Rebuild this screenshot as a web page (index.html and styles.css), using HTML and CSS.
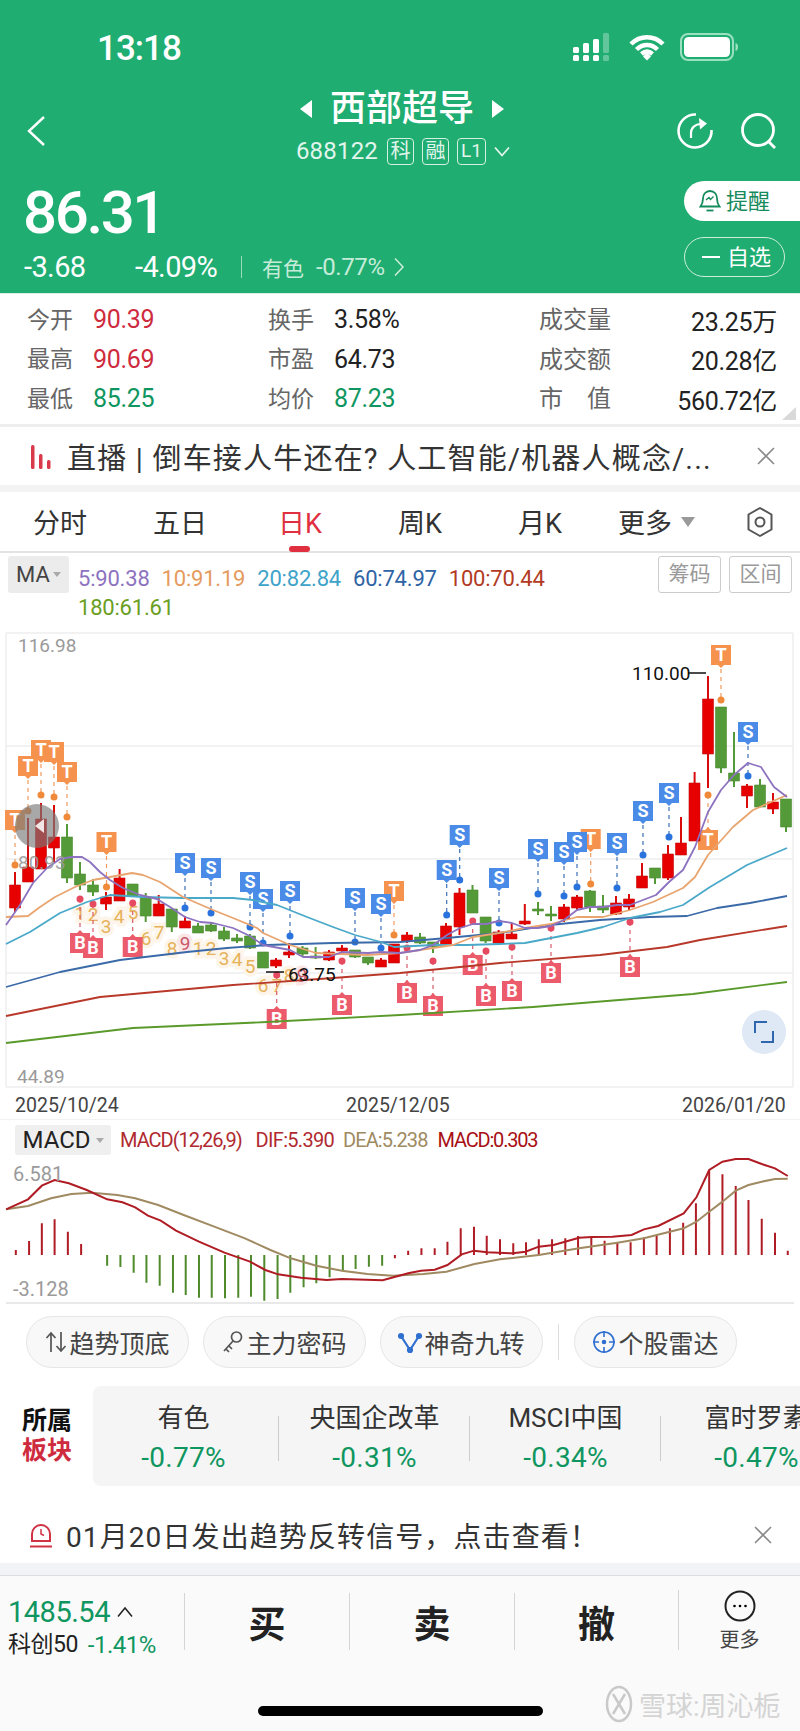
FILE: index.html
```html
<!DOCTYPE html>
<html lang="zh">
<head>
<meta charset="utf-8">
<title>西部超导</title>
<link rel="stylesheet" href="styles.css">
</head>
<body>
<div class="page">
  <header class="header">
    <div class="status">
      <span class="time">13:18</span>
      <div class="status-icons">
        <svg width="42" height="28" viewBox="0 0 42 28" fill="#fff"><rect x="1" y="14" width="6" height="6" rx="1.5"/><rect x="1" y="22" width="6" height="6" rx="1.5"/><rect x="11" y="10" width="6" height="10" rx="1.5"/><rect x="11" y="22" width="6" height="6" rx="1.5"/><rect x="21" y="6" width="6" height="14" rx="1.5"/><rect x="21" y="22" width="6" height="6" rx="1.5"/><g opacity=".3"><rect x="31" y="0" width="6" height="20" rx="1.5"/><rect x="31" y="22" width="6" height="6" rx="1.5"/></g></svg>
        <svg width="36" height="27" viewBox="0 0 36 27"><path d="M2 10C11 1 25 1 34 10M7.5 15.5C13.5 9.5 22.5 9.5 28.500 15.500M12.500 20C16 17 20 17 23.500 20" fill="none" stroke="#fff" stroke-width="4.500"/><path d="M14 22.500 18 18.500 22 22.500 18 26.500Z" fill="#fff"/></svg>
        <svg class="battery" width="59" height="28" viewBox="0 0 59 28"><rect x="1" y="1" width="52" height="26" rx="7" fill="none" stroke="#9be0c0" stroke-width="2"/><rect x="4" y="4" width="46" height="20" rx="4.500" fill="#fff"/><path d="M55.500 10c2 .5 2.500 2 2.500 4s-.5 3.500-2.500 4z" fill="#9be0c0"/></svg>
      </div>
    </div>
    <div class="titlebar">
      <svg class="back" width="20" height="32" viewBox="0 0 20 32"><path d="M18 2 3 16l15 14" fill="none" stroke="#fff" stroke-width="2.400"/></svg>
      <div class="title-mid">
        <div class="title"><i class="tri-l"></i><span>西部超导</span><i class="tri-r"></i></div>
        <div class="code"><span class="code-num">688122</span><b class="tag">科</b><b class="tag">融</b><b class="tag tag-l">L1</b>
          <svg width="16" height="11" viewBox="0 0 16 11"><path d="M1 1.500 8 9.500 15 1.500" fill="none" stroke="#e5f6ee" stroke-width="1.800"/></svg></div>
      </div>
      <div class="actions">
        <svg width="38" height="38" viewBox="0 0 38 38" fill="none" stroke="#fff" stroke-width="2.600"><path d="M20 2.500A16.500 16.500 0 1 0 35.500 18"/><path d="M15 26v-5c0-5 4-9 10-9" stroke-width="2.200"/><path d="M23 6l8 5.500-7 6z" fill="#fff" stroke="none"/></svg>
        <svg width="38" height="38" viewBox="0 0 38 38" fill="none" stroke="#fff" stroke-width="2.800"><circle cx="18" cy="18" r="15.500"/><path d="M28 29l7 7"/></svg>
      </div>
    </div>
    <div class="quote">
      <div class="quote-left">
        <div class="price">86.31</div>
        <div class="change">
          <span class="chg-a">-3.68</span><span class="chg-b">-4.09%</span><i class="vbar"></i>
          <span class="sec">有色</span><span class="sec-v">-0.77%</span>
          <svg width="12" height="20" viewBox="0 0 12 20"><path d="M2 1.500 10 10 2 18.500" fill="none" stroke="#cdeedd" stroke-width="1.500"/></svg>
        </div>
      </div>
      <div class="quote-right">
        <div class="pill pill-on">
          <svg width="22" height="24" viewBox="0 0 22 24" fill="none" stroke="#158a5b" stroke-width="1.800"><path d="M11 2c-4.500 0-7 3.500-7 7.500 0 3.500-1 6-2.500 8h19c-1.500-2-2.500-4.500-2.500-8C18 5.500 15.500 2 11 2z"/><path d="M7.500 21.500h7" /><path d="M7 11l3-2.500 1.500 2 3-3" stroke-width="1.400" stroke="#158a5b"/></svg>
          <span>提醒</span></div>
        <div class="pill pill-off"><i class="minus"></i><span>自选</span></div>
      </div>
    </div>
  </header>

  <section class="stats">
    <div class="cell"><span class="lb">今开</span><span class="val red">90.39</span></div>
    <div class="cell"><span class="lb">换手</span><span class="val">3.58%</span></div>
    <div class="cell wide"><span class="lb lb3">成交量</span><span class="val">23.25万</span></div>
    <div class="cell"><span class="lb">最高</span><span class="val red">90.69</span></div>
    <div class="cell"><span class="lb">市盈</span><span class="val">64.73</span></div>
    <div class="cell wide"><span class="lb lb3">成交额</span><span class="val">20.28亿</span></div>
    <div class="cell"><span class="lb">最低</span><span class="val green">85.25</span></div>
    <div class="cell"><span class="lb">均价</span><span class="val green">87.23</span></div>
    <div class="cell wide"><span class="lb lb3">市　值</span><span class="val">560.72亿</span></div>
    <i class="corner"></i>
  </section>

  <section class="live">
    <svg width="20" height="26" viewBox="0 0 20 26" fill="#d93a4a"><rect x="0" y="2" width="3.500" height="24" rx="1.500"/><rect x="8" y="11" width="3.500" height="15" rx="1.500"/><rect x="16" y="17" width="3.500" height="9" rx="1.500"/></svg>
    <span class="live-text">直播 | 倒车接人牛还在? 人工智能/机器人概念/...</span>
    <svg class="x-ico" width="20" height="20" viewBox="0 0 20 20"><path d="M2 2l16 16M18 2 2 18" stroke="#8a8a8a" stroke-width="1.600"/></svg>
  </section>
  <div class="band"></div>

  <nav class="tabs">
    <span class="tab">分时</span><span class="tab">五日</span><span class="tab on">日K</span><span class="tab">周K</span><span class="tab">月K</span>
    <span class="tab tab-more">更多<i class="tri-d"></i></span>
    <span class="tab-set"><svg width="28" height="32" viewBox="0 0 28 32" fill="none" stroke="#555" stroke-width="2"><path d="M14 2 25.500 8.500v15L14 30 2.500 23.500v-15z" stroke-linejoin="round"/><circle cx="14" cy="16" r="4.500"/></svg></span>
  </nav>

  <section class="ma">
    <div class="ma-chip">MA<i class="tri-s"></i></div>
    <div class="ma-vals">
      <span class="m5">5:90.38</span><span class="m10">10:91.19</span><span class="m20">20:82.84</span><span class="m60">60:74.97</span><span class="m100">100:70.44</span><span class="m180">180:61.61</span>
    </div>
    <div class="ma-btns"><span class="ma-btn">筹码</span><span class="ma-btn">区间</span></div>
  </section>

  <svg class="kchart" width="800" height="500" viewBox="0 620 800 500">
    <defs>
      <path id="fd" d="M-10 0h20v20h-7l-3 3-3-3h-7z"/>
      <path id="fu" d="M-10 3h7l3-3 3 3h7v20h-20z"/>
    </defs>
    <path d="M6 633H793M6 746H793M6 859H793M6 973H793M6 1087H793M6 633V1087M793 633V1087M0 1120H800" stroke="#eeeeee" stroke-width="1.500" fill="none"/>
    <text class="axis" x="18" y="652">116.98</text>
    <text class="axis" x="17" y="1083">44.89</text>
    <g class="num">
      <text x="80" y="920">1</text><text x="93" y="921">2</text><text x="106" y="933">3</text><text x="119" y="923">4</text><text x="133" y="919">5</text><text x="146" y="945">6</text><text x="159" y="939">7</text><text x="172" y="955">8</text><text class="n9" x="185" y="950">9</text>
      <text x="198" y="955">1</text><text x="211" y="955">2</text><text x="224" y="965">3</text><text x="237" y="966">4</text><text x="250" y="973">5</text><text x="263" y="992">6</text><text x="277" y="992">7</text><text x="289" y="982">8</text><text class="n9" x="302" y="982">9</text>
    </g>
    <path class="dash dt" d="M15 835V865M28 780V811M41 764V795M54 766V797M67 786V817M106.500 856V887M394 905V935M590.700 853V884M721 669V700M708 795V830"/>
    <path class="dash ds" d="M185 878V908M211 882V913M250 896V927M263 913V943M290 906V936M355 912V942M381 918V948M446.700 884V915M459.700 849V880M499 892V923M538 863V894M564 866V896M577 856V887M617 857V888M643 825V855M669 807V837M748 746V776"/>
    <path class="dash db" d="M80 899V933M93 904V938M132.700 903V937M276.700 975V1009M342 961V995M472.700 921V955M407 948V983M433 961V996M486 951V986M512 947V981M551 928V963M630 922V957"/>
    <g class="fl-t">
      <use href="#fd" x="15" y="810"/><use href="#fd" x="28" y="756"/><use href="#fd" x="54" y="742"/><use href="#fd" x="41" y="740"/><use href="#fd" x="67" y="762"/><use href="#fd" x="106.500" y="832"/><use href="#fd" x="394" y="881"/><use href="#fd" x="590.700" y="829"/><use href="#fd" x="721" y="645"/><use href="#fu" x="708" y="827"/>
    </g>
    <g class="ltr">
      <text x="15" y="826">T</text><text x="28" y="772">T</text><text x="54" y="758">T</text><text x="41" y="756">T</text><text x="67" y="778">T</text><text x="106.500" y="848">T</text><text x="394" y="897">T</text><text x="590.700" y="845">T</text><text x="721" y="661">T</text><text x="708" y="846">T</text>
    </g>
    <g class="fl-s">
      <use href="#fd" x="185" y="853"/><use href="#fd" x="211" y="858"/><use href="#fd" x="250" y="872"/><use href="#fd" x="263" y="889"/><use href="#fd" x="290" y="881"/><use href="#fd" x="355" y="888"/><use href="#fd" x="381" y="894"/><use href="#fd" x="446.700" y="860"/><use href="#fd" x="459.700" y="825"/><use href="#fd" x="499" y="868"/><use href="#fd" x="538" y="839"/><use href="#fd" x="577" y="832"/><use href="#fd" x="564" y="842"/><use href="#fd" x="617" y="833"/><use href="#fd" x="643" y="801"/><use href="#fd" x="669" y="783"/><use href="#fd" x="748" y="722"/>
    </g>
    <g class="ltr">
      <text x="185" y="869">S</text><text x="211" y="874">S</text><text x="250" y="888">S</text><text x="263" y="905">S</text><text x="290" y="897">S</text><text x="355" y="904">S</text><text x="381" y="910">S</text><text x="446.700" y="876">S</text><text x="459.700" y="841">S</text><text x="499" y="884">S</text><text x="538" y="855">S</text><text x="577" y="848">S</text><text x="564" y="858">S</text><text x="617" y="849">S</text><text x="643" y="817">S</text><text x="669" y="799">S</text><text x="748" y="738">S</text>
    </g>
    <g class="fl-b">
      <use href="#fu" x="93" y="935"/><use href="#fu" x="80" y="930"/><use href="#fu" x="132.700" y="934"/><use href="#fu" x="276.700" y="1006"/><use href="#fu" x="342" y="992"/><use href="#fu" x="472.700" y="952"/><use href="#fu" x="407" y="980"/><use href="#fu" x="433" y="993"/><use href="#fu" x="486" y="983"/><use href="#fu" x="512" y="978"/><use href="#fu" x="551" y="960"/><use href="#fu" x="630" y="954"/>
    </g>
    <g class="ltr">
      <text x="93" y="954">B</text><text x="80" y="949">B</text><text x="132.700" y="953">B</text><text x="276.700" y="1025">B</text><text x="342" y="1011">B</text><text x="472.700" y="971">B</text><text x="407" y="999">B</text><text x="433" y="1012">B</text><text x="486" y="1002">B</text><text x="512" y="997">B</text><text x="551" y="979">B</text><text x="630" y="973">B</text>
    </g>
    <path class="wk wr" d="M15 872V912M28 818V882M41 803V869M54 805V862M106 892V910M119.600 869V901M158.700 895V916M185 916V928M276 958V968M289 943V958M329 950V961M342 945V953M381 958V967M394 944V963M407 932V943M446 923V945M459.500 888V935M498.600 930V943M511.700 923V939M524.800 904V925M564 904V922M577 895V910M616 896V915M629 894V910M642 863V888M668 845V880M681 817V855M694.600 772V841M708 676V788M747 784V808M773 793V814"/>
    <path class="wk wg" d="M67 824V883M80 862V890M93 879V896M132.600 884V896M145.700 893V922M171.800 909V932M198 923V933M211 922V932M224 927V941M237 934V943M250 934V949M263 952V968M302.500 946V957M315.600 947V959M355 950V958M368 957V965M420 933V944M433 942V953M472.500 885V913M485.600 917V943M538 902V915M551 906V921M590 890V912M603 895V913M655 868V884M721 707V773M734 732V787M760 779V807M786 799V832"/>
    <path class="bd-r" d="M9.500 885h11v23h-11zM22.500 867h11v15h-11zM35.500 819h11v50h-11zM48.500 837h11v11h-11zM100.500 897h11v7h-11zM114 878h11v23h-11zM153.200 904h11v12h-11zM179.500 921h11v7h-11zM270.500 960h11v6h-11zM283.500 952h11v3h-11zM323.500 952h11v8h-11zM336.500 948h11v3h-11zM375.500 960h11v7h-11zM388.500 944h11v19h-11zM401.500 935h11v6h-11zM440.500 926h11v19h-11zM454 893h11v34h-11zM493 932h11v11h-11zM506 934h11v5h-11zM519.300 921h11v3h-11zM558.500 907h11v12h-11zM571.500 897h11v11h-11zM610.500 903h11v11h-11zM623.500 899h11v8h-11zM636.500 876h11v12h-11zM662.500 854h11v24h-11zM675.500 843h11v12h-11zM689 783h11v58h-11zM702.500 699h11v55h-11zM741.500 786h11v10h-11zM767.500 802h11v7h-11z"/>
    <path class="bd-g" d="M61.500 837h11v41h-11zM74.500 874h11v11h-11zM87.500 885h11v7h-11zM127.100 884h11v12h-11zM140.200 897h11v19h-11zM166.300 909h11v18h-11zM192.500 926h11v7h-11zM205.500 925h11v6h-11zM218.500 931h11v8h-11zM231.500 938h11v3h-11zM244.500 936h11v12h-11zM257.500 952h11v16h-11zM297 948h11v6h-11zM310.100 956h11v2h-11zM349.500 950h11v7h-11zM362.500 957h11v6h-11zM414.500 937h11v6h-11zM427.500 942h11v5h-11zM467 890h11v23h-11zM480.100 917h11v24h-11zM532.500 909h11v2h-11zM545.500 914h11v2h-11zM584.500 891h11v16h-11zM597.500 906h11v4h-11zM649.500 868h11v10h-11zM715.500 707h11v61h-11zM728.500 773h11v8h-11zM754.500 785h11v22h-11zM780.500 799h11v28h-11z"/>
    <g class="dots-t"><circle cx="15" cy="865" r="3.500"/><circle cx="28" cy="811" r="3.500"/><circle cx="41" cy="795" r="3.500"/><circle cx="54" cy="797" r="3.500"/><circle cx="67" cy="817" r="3.500"/><circle cx="106.500" cy="887" r="3.500"/><circle cx="394" cy="935" r="3.500"/><circle cx="590.700" cy="884" r="3.500"/><circle cx="721" cy="700" r="3.500"/><circle cx="708" cy="795" r="3.500"/></g>
    <g class="dots-s"><circle cx="185" cy="908" r="3.500"/><circle cx="211" cy="913" r="3.500"/><circle cx="250" cy="927" r="3.500"/><circle cx="263" cy="943" r="3.500"/><circle cx="290" cy="936" r="3.500"/><circle cx="355" cy="942" r="3.500"/><circle cx="381" cy="948" r="3.500"/><circle cx="446.700" cy="915" r="3.500"/><circle cx="459.700" cy="880" r="3.500"/><circle cx="499" cy="923" r="3.500"/><circle cx="538" cy="894" r="3.500"/><circle cx="564" cy="896" r="3.500"/><circle cx="577" cy="887" r="3.500"/><circle cx="617" cy="888" r="3.500"/><circle cx="643" cy="855" r="3.500"/><circle cx="669" cy="837" r="3.500"/><circle cx="748" cy="776" r="3.500"/></g>
    <g class="dots-b"><circle cx="80" cy="899" r="3.500"/><circle cx="93" cy="904" r="3.500"/><circle cx="132.700" cy="903" r="3.500"/><circle cx="276.700" cy="975" r="3.500"/><circle cx="342" cy="961" r="3.500"/><circle cx="472.700" cy="921" r="3.500"/><circle cx="407" cy="948" r="3.500"/><circle cx="433" cy="961" r="3.500"/><circle cx="486" cy="951" r="3.500"/><circle cx="512" cy="947" r="3.500"/><circle cx="551" cy="928" r="3.500"/><circle cx="630" cy="922" r="3.500"/></g>
    <g class="lines">
      <polyline stroke="#5a9a2a" points="6,1043 133,1028 267,1022 400,1015 533,1007 693,994 787,982"/>
      <polyline stroke="#b8382a" points="6,1016 100,997 233,985 333,978 400,973 500,963 600,955 667,947 700,940 787,926"/>
      <polyline stroke="#3a6aa8" points="6,987 60,972 120,960 187,952 227,948 267,945 333,943 400,942 447,938 500,933 550,925 600,920 650,917 687,916 717,908 750,903 787,896"/>
      <polyline stroke="#4aa9c9" points="6,944 30,932 60,913 87,902 110,895 143,897 183,898 233,898 253,900 277,905 307,917 333,927 355,935 381,942 394,947 433,945 467,945 499,944 525,943 551,938 577,933 603,927 630,918 660,912 683,905 710,887 747,865 787,848"/>
      <polyline stroke="#e8a56f" points="6,917 28,916 40,907 55,897 75,887 93,880 110,877 132,873 143,875 160,882 183,897 213,910 233,918 257,928 263,933 290,945 316,953 367,955 400,953 433,948 453,945 473,937 499,933 525,928 551,924 577,917 603,917 630,910 653,902 683,888 695,877 708,855 733,827 753,810 787,795"/>
      <polyline stroke="#8d72c0" points="6,925 20,905 33,883 47,868 60,859 72,857 82,857 90,862 100,872 110,880 123,888 140,895 157,899 170,907 185,917 200,922 213,923 233,928 250,936 263,945 290,950 303,957 316,957 329,957 342,952 368,953 381,952 400,953 420,950 433,945 447,935 460,928 473,924 486,924 499,921 512,923 525,928 538,928 551,926 564,920 577,910 590,907 603,907 617,905 630,905 643,900 656,895 669,882 683,870 695,847 708,812 721,790 734,775 748,763 761,767 774,787 787,797"/>
    </g>
    <circle cx="37" cy="826" r="22" fill="#7a7a7a" fill-opacity=".65"/>
    <path d="M44 819 35 826l9 7z" fill="#fff" opacity=".85"/>
    <text class="axis" x="18" y="869" opacity=".9">80.93</text>
    <text class="mark" x="632" y="680">110.00</text>
    <path d="M688 673H706M266 972H284" stroke="#111" stroke-width="1.500"/>
    <text class="mark" x="288" y="981">63.75</text>
    <circle cx="764" cy="1032" r="22" fill="#dfe8f5"/>
    <path d="M755 1033v-11h12M773 1031v11h-12" fill="none" stroke="#2e67ad" stroke-width="2"/>
    <text class="date" x="15" y="1112">2025/10/24</text>
    <text class="date" x="346" y="1112">2025/12/05</text>
    <text class="date" x="682" y="1112">2026/01/20</text>
  </svg>

  <section class="macd">
    <div class="macd-head">
      <div class="macd-chip">MACD<i class="tri-s"></i></div>
      <span class="md1">MACD(12,26,9)</span><span class="md2">DIF:5.390</span><span class="md3">DEA:5.238</span><span class="md4">MACD:0.303</span>
    </div>
    <div class="macd-plot">
      <span class="mlab mtop">6.581</span><span class="mlab mbot">-3.128</span>
      <svg class="macd-svg" width="800" height="144" viewBox="0 120 1568 432" preserveAspectRatio="none">
        <g class="hr"><path d="M31 390V405M57 363V405M82 310V405M107 298V405M133 335V405M159 372V405M774 405V415M800 392V405M826 385V405M852 385V405M877 365V405M903 325V405M929 320V405M954 347V405M980 358V405M1006 370V405M1031 367V405M1056 358V405M1082 358V405M1108 355V405M1133 348V405M1159 353V405M1185 362V405M1210 367V405M1236 367V405M1262 352V405M1287 345V405M1313 325V405M1339 308V405M1364 250V405M1390 150V405M1416 163V405M1442 198V405M1467 240V405M1493 296V405M1519 338V405M1544 392V405"/></g>
        <g class="hg"><path d="M210 405V437M236 405V441M262 405V458M287 405V488M313 405V497M339 405V518M364 405V525M390 405V533M415 405V533M441 405V535M467 405V533M492 405V530M518 405V542M544 405V537M569 405V518M595 405V502M620 405V490M646 405V472M672 405V450M697 405V447M723 405V440M749 405V437"/></g>
        <polyline class="dea" points="12,268 55,258 100,235 140,222 180,218 230,225 265,235 310,255 360,285 420,320 480,355 530,390 570,415 620,437 670,452 720,462 770,467 830,462 875,455 930,432 980,418 1056,405 1135,385 1210,368 1262,355 1340,325 1365,305 1390,275 1416,245 1442,212 1467,195 1493,185 1519,177 1544,176"/>
        <polyline class="dif" points="12,268 55,238 82,197 107,180 135,190 170,210 210,238 240,247 265,262 290,287 315,302 345,332 390,365 440,398 490,425 520,450 545,463 590,473 640,480 670,477 750,481 775,470 800,460 825,452 852,449 877,435 905,403 929,392 955,397 1005,400 1030,395 1056,380 1085,375 1135,353 1160,351 1200,350 1238,345 1262,328 1290,318 1340,280 1365,232 1390,150 1416,125 1442,117 1467,117 1493,132 1519,145 1544,168"/>
      </svg>
    </div>
  </section>

  <section class="chips">
    <div class="chip"><svg width="22" height="24" viewBox="0 0 22 24" fill="none" stroke="#555" stroke-width="1.700"><path d="M6 22V3M1.500 8 6 3l4.500 5M16 2v19M11.500 16l4.500 5 4.500-5"/></svg><span>趋势顶底</span></div>
    <div class="chip"><svg width="22" height="24" viewBox="0 0 22 24" fill="none" stroke="#555" stroke-width="1.700"><circle cx="14.500" cy="7" r="5"/><path d="M11 11 2 21M4 19l3 3M7 16l3 3"/></svg><span>主力密码</span></div>
    <div class="chip"><svg width="24" height="24" viewBox="0 0 24 24" fill="none" stroke="#2f6fcf" stroke-width="2.200"><path d="M3 6l9 14 9-14"/><circle cx="3" cy="6" r="2" fill="#2f6fcf"/><circle cx="21" cy="6" r="2" fill="#2f6fcf"/><circle cx="12" cy="20" r="2" fill="#2f6fcf"/></svg><span>神奇九转</span></div>
    <i class="chip-sep"></i>
    <div class="chip"><svg width="24" height="24" viewBox="0 0 24 24" fill="none" stroke="#2f6fcf" stroke-width="1.600"><circle cx="12" cy="12" r="10"/><path d="M12 1v6M12 17v6M1 12h6M17 12h6"/><circle cx="12" cy="12" r="1.500" fill="#2f6fcf"/></svg><span>个股雷达</span></div>
  </section>

  <section class="sector">
    <div class="sector-t"><b>所属</b><b class="red">板块</b></div>
    <div class="sector-p">
      <div class="sec-i"><span>有色</span><b>-0.77%</b></div>
      <div class="sec-i"><span>央国企改革</span><b>-0.31%</b></div>
      <div class="sec-i"><span>MSCI中国</span><b>-0.34%</b></div>
      <div class="sec-i"><span>富时罗素</span><b>-0.47%</b></div>
    </div>
  </section>

  <section class="alert">
    <svg width="24" height="26" viewBox="0 0 24 26" fill="none" stroke="#cf3344" stroke-width="2"><path d="M3 19V12a9 9 0 0 1 18 0v7z"/><path d="M1 24.500h22"/><path d="M12 7v5l3 1.500" stroke-width="1.500"/></svg>
    <span class="alert-text">01月20日发出趋势反转信号，点击查看！</span>
    <svg class="x-ico" width="20" height="20" viewBox="0 0 20 20"><path d="M2 2l16 16M18 2 2 18" stroke="#8a8a8a" stroke-width="1.600"/></svg>
  </section>
  <div class="band2"></div>

  <footer class="foot">
    <div class="trade">
      <div class="idx">
        <div class="idx-a"><span>1485.54</span><svg width="16" height="12" viewBox="0 0 16 12"><path d="M1 10.500 8 2l7 8.500" fill="none" stroke="#222" stroke-width="1.500"/></svg></div>
        <div class="idx-b"><span>科创50</span><b>-1.41%</b></div>
      </div>
      <div class="act">买</div><div class="act">卖</div><div class="act">撤</div>
      <div class="more">
        <svg width="32" height="32" viewBox="0 0 32 32"><circle cx="16" cy="16" r="14.500" fill="none" stroke="#222" stroke-width="2"/><circle cx="10.500" cy="16" r="1.300"/><circle cx="16" cy="16" r="1.300"/><circle cx="21.500" cy="16" r="1.300"/></svg>
        <span>更多</span>
      </div>
    </div>
    <div class="home"></div>
    <div class="wm">
      <svg width="28" height="40" viewBox="0 0 28 40" fill="none" stroke="#c9c9c9" stroke-width="2.500"><ellipse cx="14" cy="20" rx="12" ry="17"/><path d="M8 10 20 30M20 10 8 30"/></svg>
      <span>雪球:周沁栀</span>
    </div>
  </footer>
</div>
</body>
</html>
```
FILE: styles.css
```css
*{box-sizing:border-box;margin:0;padding:0}
html,body{background:#fff}
body{width:800px;height:1731px;overflow:hidden;font-family:Roboto,"Noto Sans CJK SC",sans-serif;color:#222}
i{display:block;font-style:normal}
.page{width:800px;height:1731px;overflow:hidden;position:relative}
.red{color:#cf2b3f}
.green{color:#0f9660}

.header{height:293px;background:#20ad72;color:#fff}
.status{height:88px;display:flex;align-items:center;justify-content:space-between;padding:6px 61px 0 97px}
.time{font-size:35px;font-weight:500;letter-spacing:-1px;transform:translateY(1px)}
.status-icons{display:flex;align-items:center;gap:15px}
.titlebar{height:86px;display:grid;grid-template-columns:1fr auto 1fr;align-items:center;padding:0 22px 0 26px}
.title-mid{display:flex;flex-direction:column;align-items:center}
.title{height:38px;display:flex;align-items:center;gap:18px;font-size:36px;font-weight:500;line-height:38px;margin-top:2px}
.tri-l{width:0;height:0;border:solid transparent;border-width:9px 12px 9px 0;border-right-color:#fff}
.tri-r{width:0;height:0;border:solid transparent;border-width:9px 0 9px 12px;border-left-color:#fff}
.code{height:46px;display:flex;align-items:center;gap:8px;margin-left:2px;color:#e2f5ec}
.code-num{font-size:24px;letter-spacing:.2px;margin-right:1px}
.tag{width:27px;height:27px;border:1.300px solid #d4f0e3;border-radius:4px;font-size:20px;font-weight:400;line-height:24px;text-align:center}
.tag-l{width:29px;font-size:19px}
.actions{display:flex;justify-content:flex-end;gap:26px}
.quote{height:119px;display:flex;justify-content:space-between;padding:7px 0 0 24px}
.price{font-size:60px;font-weight:500;line-height:60px;letter-spacing:-2.400px;transform:translateY(2px);margin-left:-1px}
.change{display:flex;align-items:center;height:36px;margin-top:8px;font-size:29px;letter-spacing:-.6px}
.chg-a{width:111px}
.chg-b{width:106px}
.vbar{width:1px;height:22px;background:#9bdcbd;margin-right:20px}
.sec{font-size:21px;color:#c6ecd9;margin-right:12px;letter-spacing:0}
.sec-v{font-size:24px;color:#c6ecd9;margin-right:8px;letter-spacing:-.4px}
.quote-right{display:flex;flex-direction:column;align-items:flex-end;gap:16px}
.pill{height:40px;display:flex;align-items:center;font-size:22px;border-radius:20px}
.pill span{transform:translateY(-2px)}
.pill-on{width:116px;background:#fff;color:#158a5b;padding-left:15px;gap:5px;border-radius:20px 0 0 20px}
.pill-off{width:101px;margin-right:15px;border:1px solid #cdeedd;padding-left:17px;gap:7px;color:#fff}
.minus{width:18px;height:2.500px;background:#fff}

.stats{height:134px;padding:6px 0 0 27px;display:grid;grid-template-columns:241px 271px 238px;grid-auto-rows:39.500px;position:relative;border-bottom:3px solid #eee;border-top:1px solid #d9eee4}
.cell{display:flex;align-items:center}
.wide{justify-content:space-between}
.lb{width:66px;font-size:23px;color:#666;margin-top:-4px}
.lb3{width:72px;font-size:24px}
.val{font-size:25px;letter-spacing:-.3px;color:#222}
.val.red{color:#cf2b3f}
.val.green{color:#0f9660}
.corner{position:absolute;right:4px;bottom:4px;width:0;height:0;border:solid transparent;border-width:0 0 13px 14px;border-bottom-color:#d9d9d9}

.live{height:58px;display:flex;align-items:center;padding:0 24px 0 31px}
.live-text{flex:1;margin-left:16px;font-size:29px;color:#333;letter-spacing:1.200px;white-space:nowrap}
.x-ico{flex:none}
.band{height:7px;background:#f3f3f3}

.tabs{height:61px;display:flex;align-items:center;border-bottom:2px solid #e3e3e3;position:relative}
.tab{width:120px;display:flex;align-items:center;justify-content:center;font-size:27px;color:#333;position:relative;gap:9px}
.tab-more{padding-right:7px}
.tab.on{color:#e0303f}
.tab.on::after{content:"";position:absolute;left:49px;bottom:-11px;width:21px;height:6px;border-radius:3px;background:#e0303f}
.tab-set{width:80px;display:flex;justify-content:center}
.tri-d{width:0;height:0;border:solid transparent;border-width:10px 7px 0;border-top-color:#999}

.ma{height:67px;display:flex;position:relative;padding:3px 8px 0}
.ma-chip{width:61px;height:37px;background:#ececec;border-radius:3px;display:flex;align-items:center;justify-content:center;gap:3px;font-size:22px;color:#444}
.tri-s{width:0;height:0;border:solid transparent;border-width:5px 4.500px 0;border-top-color:#aaa}
.ma-vals{width:500px;margin-left:9px;padding-top:8px;display:flex;flex-wrap:wrap;column-gap:12px;font-size:22px;line-height:29px}
.ma-vals span{letter-spacing:-.2px}
.m5{color:#8d72c0}.m10{color:#e59b5e}.m20{color:#3fa3c9}.m60{color:#2e63a5}.m100{color:#b23a24}.m180{color:#6a9e22;width:200px}
.ma-btns{display:flex;gap:8px;margin-left:auto}
.ma-btn{width:63px;height:37px;border:1.500px solid #ccc;border-radius:3px;text-align:center;font-size:21px;line-height:34px;color:#999}

.kchart{display:block}
.axis{font-size:19px;fill:#9a9a9a}
.num text{font-size:19px;fill:#e6b25a;text-anchor:middle;paint-order:stroke;stroke:#fdf5ea;stroke-width:7px}
.num .n9{fill:#c9566a;stroke:#fbe6e6}
.dash{fill:none;stroke-width:1.200;stroke-dasharray:4 4}
.dt{stroke:#ee9a5e}.ds{stroke:#3b6fb5}.db{stroke:#d95a6a}
.fl-t{fill:#f5924d}.fl-s{fill:#4a8be8}.fl-b{fill:#ec5b6b}
.ltr text{font-size:18px;font-weight:700;fill:#fff;text-anchor:middle}
.wk{fill:none;stroke-width:2}
.wr{stroke:#d90b0b}.wg{stroke:#559a38}
.bd-r{fill:#e60000;stroke:#c40a0a;stroke-width:.6}
.bd-g{fill:#559a38;stroke:#4a8c30;stroke-width:.6}
.dots-t{fill:#ef8a3a}.dots-s{fill:#2a72dc}.dots-b{fill:#e64a60}
.lines polyline{fill:none;stroke-width:1.800;stroke-linejoin:round}
.mark{font-size:19px;fill:#111}
.date{font-size:19.500px;fill:#444}

.macd{height:184px}
.macd-head{height:40px;display:flex;align-items:center;padding:0 0 0 15px;font-size:20px}
.macd-chip{width:96px;height:30px;margin-right:9px;background:#efefef;border-radius:3px;display:flex;align-items:center;justify-content:center;gap:5px;font-size:24px;color:#222}
.md1{color:#b02a30;margin-right:14px;letter-spacing:-1px}.md2{color:#b02a30;margin-right:9px;letter-spacing:-.7px}.md3{color:#a08a62;margin-right:10px;letter-spacing:-.9px}.md4{color:#a80f14;letter-spacing:-1.200px}
.macd-plot{height:144px;position:relative;border-bottom:2px solid #e9e9e9;margin:0 6px}
.macd-svg{display:block;margin-left:-6px;overflow:visible}
.macd-svg path,.macd-svg polyline{fill:none;vector-effect:non-scaling-stroke}
.hr{stroke:#b01c24;stroke-width:2}
.hg{stroke:#4f8a2c;stroke-width:2}
.dea{stroke:#a08a62;stroke-width:2}
.dif{stroke:#b01c24;stroke-width:2}
.mlab{position:absolute;left:7px;font-size:20px;color:#9a9a9a;z-index:1}
.mtop{top:2px}
.mbot{top:117px}

.chips{height:52px;margin-top:12px;padding-left:26px;display:flex;align-items:center;gap:14px}
.chip{width:163px;height:52px;border:1px solid #e6e6e6;border-radius:26px;background:#f8f8f8;display:flex;align-items:center;justify-content:center;gap:2px;font-size:25px;color:#444}
.chip-sep{width:1px;height:36px;background:#ddd;margin:0 1px}

.sector{height:100px;margin-top:18px;display:flex;align-items:stretch}
.sector-t{width:93px;padding-left:22px;display:flex;flex-direction:column;justify-content:center;font-size:25px;line-height:30px;color:#111}
.sector-t b{font-weight:700}
.sector-p{flex:1;background:#f5f5f5;border-radius:8px 0 0 8px;display:flex;overflow:hidden;padding-left:0}
.sec-i{flex:none;width:191px;display:flex;flex-direction:column;align-items:center;justify-content:center;font-size:26px;color:#333;position:relative;white-space:nowrap;gap:6px;transform:translate(-5px,2px)}
.sec-i::after{content:"";position:absolute;right:0;top:28px;width:1px;height:45px;background:#ccc}
.sec-i b{font-size:28px;font-weight:400;color:#0f9660;line-height:34px;letter-spacing:.3px}
.sec-i span{line-height:34px}

.alert{height:77px;display:flex;align-items:center;padding:20px 27px 0 29px}
.alert-text{flex:1;margin-left:13px;font-size:28px;color:#333;letter-spacing:1.100px}
.band2{height:13px;background:#f2f3f7;border-bottom:1px solid #ddd}

.foot{height:155px;background:#fafafa;position:relative;padding-top:17px}
.trade{display:flex;height:57px}
.idx{width:184px;padding-left:8px}
.idx-a{display:flex;align-items:center;gap:7px;font-size:29px;line-height:36px;color:#0f9660;letter-spacing:-.5px;margin-top:1px}
.idx-b{display:flex;gap:10px;align-items:center;font-size:23px;line-height:30px;letter-spacing:-.5px}
.idx-b b{font-weight:400;color:#0f9660;font-size:24px}
.act{width:165px;height:57px;border-left:1px solid #d5d5d5;display:flex;align-items:center;justify-content:center;font-size:37px;font-weight:700;color:#222}
.act:nth-of-type(4){width:164px}
.more{flex:1;border-left:1px solid #d5d5d5;display:flex;flex-direction:column;align-items:center;gap:6px;font-size:20px;line-height:24px;color:#444;margin-top:-3px;height:60px}
.more svg{flex:none}
.more span{flex:none}
.home{position:absolute;left:258px;top:130px;width:285px;height:10px;background:#000;border-radius:5px}
.wm{position:absolute;left:605px;top:108px;display:flex;align-items:center;gap:6px;font-size:27px;color:#d4d4d4;white-space:nowrap}
```
